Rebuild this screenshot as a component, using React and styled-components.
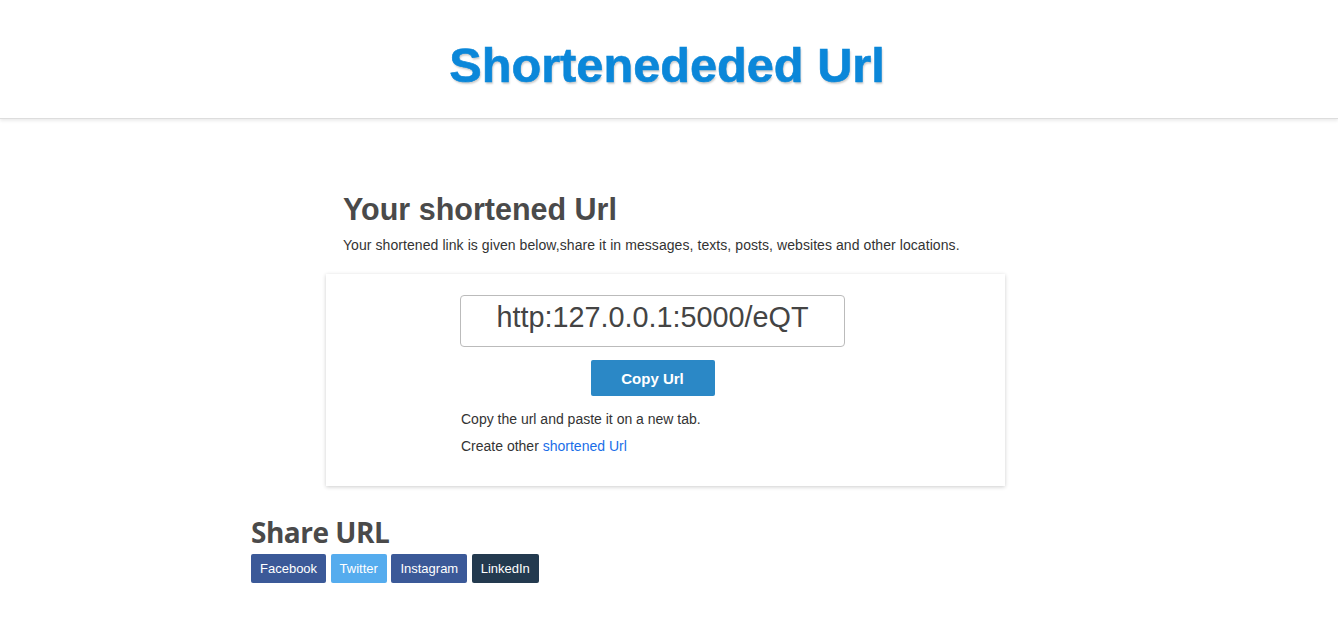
import React from "react";
import styled, { createGlobalStyle } from "styled-components";

const Global = createGlobalStyle`
  html, body { margin: 0; padding: 0; background: #fff; }
  body { font-family: "Liberation Sans", Arial, sans-serif; color: #333; }
  * { box-sizing: border-box; }
`;

const Header = styled.header`
  height: 119px;
  display: flex;
  align-items: center;
  justify-content: center;
  background: #fff;
  border-bottom: 1px solid #ddd;
  box-shadow: 0 2px 3px rgba(0,0,0,0.08);
`;

const Title = styled.h1`
  margin: 0 4px 0 0;
  padding-top: 12px;
  font-family: "Liberation Sans", Arial, sans-serif;
  font-size: 48.7px;
  font-weight: 700;
  color: #0b87d9;
  -webkit-text-stroke: 0.6px #0b87d9;
  text-shadow: 1px 2px 2px rgba(0,0,0,0.2);
`;

const Main = styled.main`
  width: 686px;
  margin: 0 auto;
  padding-top: 72px;
`;

const Heading = styled.h2`
  margin: 0 0 0 17px;
  font-size: 30.5px;
  font-weight: 700;
  color: #4a4a4a;
  line-height: 36px;
`;

const Lead = styled.p`
  margin: 8px 0 0 17px;
  font-size: 14px;
  letter-spacing: 0.07px;
  color: #333;
  line-height: 20px;
`;

const Card = styled.section`
  width: 679px;
  margin-top: 19px;
  padding: 21px 0 30px 134px;
  background: #fff;
  box-shadow: 0 1px 4px rgba(0,0,0,0.2);
`;

const Column = styled.div`
  width: 385px;
  display: flex;
  flex-direction: column;
  align-items: center;
`;

const UrlBox = styled.input`
  width: 385px;
  height: 52px;
  border: 1px solid #bbb;
  border-radius: 4px;
  text-align: center;
  font-family: "Liberation Sans", Arial, sans-serif;
  font-size: 28.8px;
  color: #444;
  padding: 0 0 8px;
  outline: none;
`;

const CopyButton = styled.button`
  margin-top: 13px;
  width: 124px;
  height: 36px;
  border: none;
  border-radius: 2px;
  background: #2b88c6;
  color: #fff;
  font-family: "Liberation Sans", Arial, sans-serif;
  font-size: 15px;
  font-weight: 700;
`;

const Note = styled.p`
  align-self: flex-start;
  margin: ${(p) => p.$top}px 0 0 1px;
  font-size: 14px;
  line-height: 20px;
  color: #333;
`;

const Link = styled.a`
  color: #1a6ee8;
  text-decoration: none;
`;

const Share = styled.section`
  width: 836px;
  margin: 0 auto;
  padding-top: 28px;
`;

const ShareTitle = styled.h3`
  margin: 0;
  font-family: "Open Sans", "Noto Sans", sans-serif;
  font-size: 28px;
  font-weight: 700;
  letter-spacing: -0.5px;
  color: #4a4a4a;
  line-height: 36px;
`;

const ShareRow = styled.div`
  display: flex;
  gap: 4.5px;
  margin-top: 4px;
`;

const ShareButton = styled.a`
  display: inline-flex;
  align-items: center;
  justify-content: center;
  height: 29px;
  padding: 0 9px;
  border-radius: 2px;
  background: ${(p) => p.$bg};
  color: #fff;
  font-size: 13px;
  text-decoration: none;
`;

export default function App() {
  return (
    <>
      <Global />
      <Header>
        <Title>Shortenededed Url</Title>
      </Header>
      <Main>
        <Heading>Your shortened Url</Heading>
        <Lead>
          Your shortened link is given below,share it in messages, texts, posts, websites and other locations.
        </Lead>
        <Card>
          <Column>
            <UrlBox readOnly value="http:127.0.0.1:5000/eQT" />
            <CopyButton>Copy Url</CopyButton>
            <Note $top={13}>Copy the url and paste it on a new tab.</Note>
            <Note $top={7}>
              Create other <Link href="#">shortened Url</Link>
            </Note>
          </Column>
        </Card>
      </Main>
      <Share>
        <ShareTitle>Share URL</ShareTitle>
        <ShareRow>
          <ShareButton $bg="#3b5998">Facebook</ShareButton>
          <ShareButton $bg="#55acee">Twitter</ShareButton>
          <ShareButton $bg="#3b5998">Instagram</ShareButton>
          <ShareButton $bg="#233a4f">LinkedIn</ShareButton>
        </ShareRow>
      </Share>
    </>
  );
}
